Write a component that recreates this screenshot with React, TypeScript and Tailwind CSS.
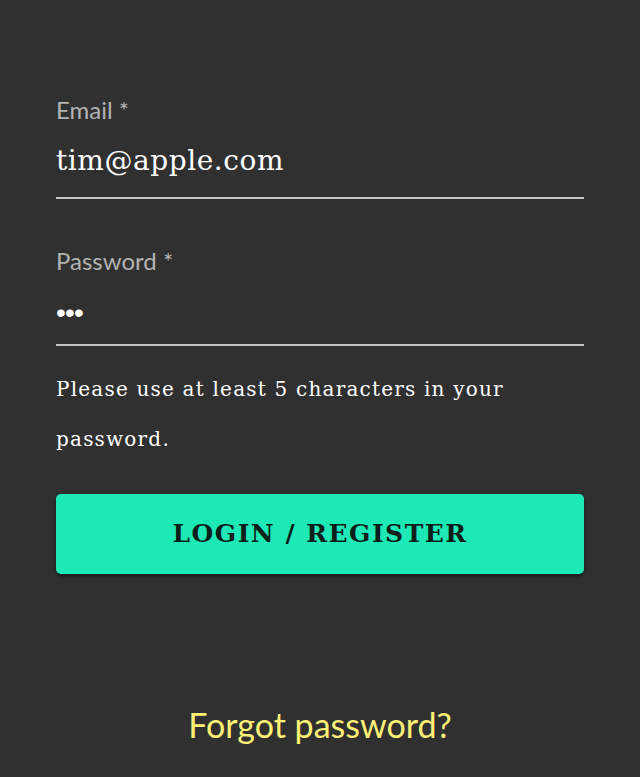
export default function App() {
  return (
    <div className="min-h-[777px] w-full bg-[#303030] px-[56px] pt-[92px]">
      <div className="flex flex-col">
        <label className="text-[24px] leading-[36px] text-[#b3b3b3] [font-family:Lato,'Open_Sans',sans-serif]">Email *</label>
        <div className="mt-[11px] border-b-2 border-[#c4c4c4] pb-[14px] text-[28px] leading-[44px] tracking-[0.02em] text-white [font-family:'DejaVu_Serif',serif]">tim@apple.com</div>
      </div>
      <div className="mt-[44px] flex flex-col">
        <label className="text-[24px] leading-[36px] text-[#b3b3b3] [font-family:Lato,'Open_Sans',sans-serif]">Password *</label>
        <div className="mt-[12px] border-b-2 border-[#c4c4c4] pb-[9px] text-[28px] leading-[44px] tracking-[-0.03em] text-white [font-family:'Liberation_Sans',sans-serif]">•••</div>
      </div>
      <p className="mt-[18px] text-[20px] leading-[50px] tracking-[0.06em] text-white [font-family:'DejaVu_Serif',serif]">
        Please use at least 5 characters in your password.
      </p>
      <button className="mt-[30px] flex h-[80px] w-full items-center justify-center rounded-[5px] bg-[#1de9b6] text-[25px] font-bold tracking-[0.06em] text-[#0b1f1a] shadow-[0_2px_4px_rgba(0,0,0,0.5)] [font-family:'DejaVu_Serif',serif]">
        LOGIN / REGISTER
      </button>
      <div className="mt-[125px] text-center text-[34px] text-[#fff176] [font-family:Lato,'Open_Sans',sans-serif]">
        Forgot password?
      </div>
    </div>
  );
}
